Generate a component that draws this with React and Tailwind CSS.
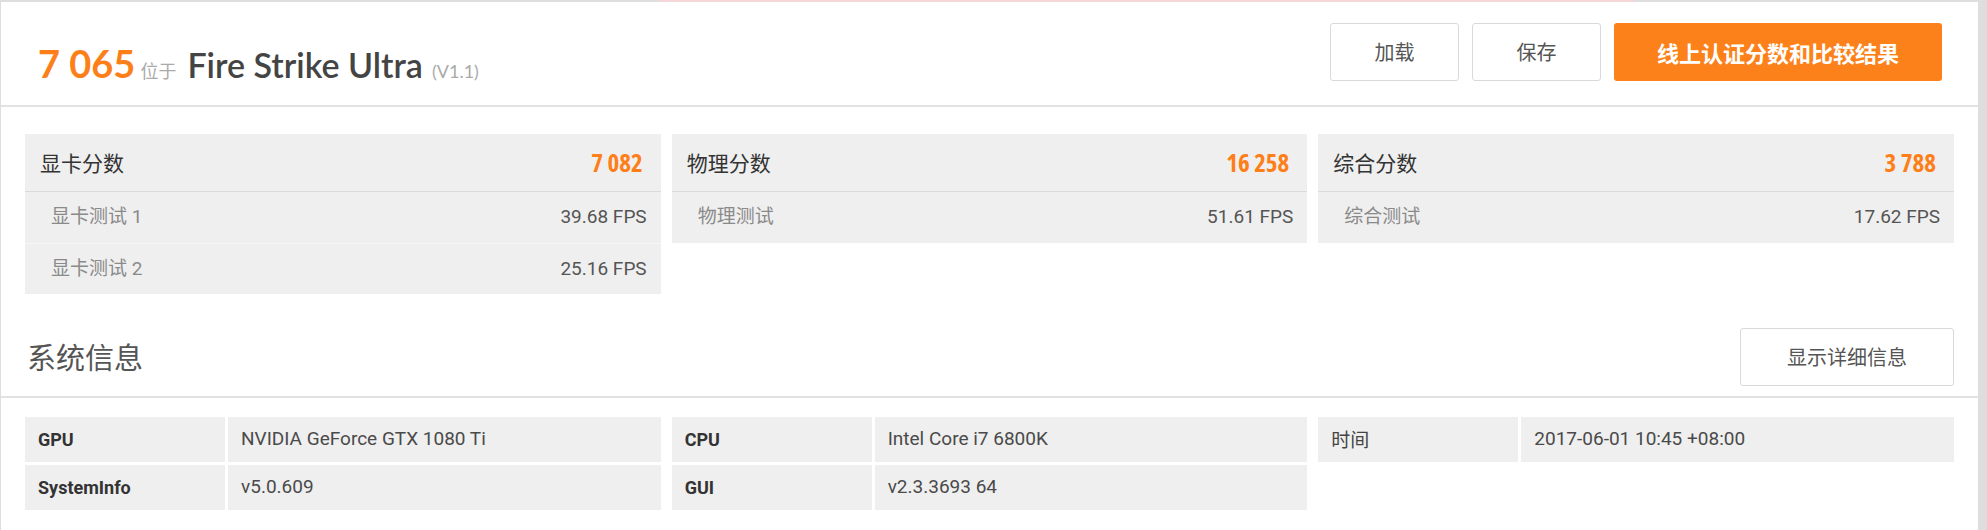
import React from "react";

const scores = [
  {
    title: "显卡分数",
    score: "7 082",
    tests: [
      { name: "显卡测试 1", value: "39.68 FPS" },
      { name: "显卡测试 2", value: "25.16 FPS" },
    ],
  },
  {
    title: "物理分数",
    score: "16 258",
    tests: [{ name: "物理测试", value: "51.61 FPS" }],
  },
  {
    title: "综合分数",
    score: "3 788",
    tests: [{ name: "综合测试", value: "17.62 FPS" }],
  },
];

const systemInfo = [
  [
    { label: "GPU", value: "NVIDIA GeForce GTX 1080 Ti" },
    { label: "SystemInfo", value: "v5.0.609" },
  ],
  [
    { label: "CPU", value: "Intel Core i7 6800K" },
    { label: "GUI", value: "v2.3.3693 64" },
  ],
  [{ label: "时间", value: "2017-06-01 10:45 +08:00", cjk: true }],
];

function ScorePanel({ item }) {
  return (
    <div className="bg-[#efefef]">
      <div className="h-[58px] flex items-center justify-between pl-[15px] pr-[18px] border-b border-[#dadada]">
        <span className="text-[21px] text-[#333] font-['Noto_Sans_CJK_SC',sans-serif]">{item.title}</span>
        <span className="text-[25px] font-bold text-[#fd7f1a] font-['Open_Sans',sans-serif] font-stretch-condensed">
          {item.score}
        </span>
      </div>
      {item.tests.map((t, i) => (
        <div
          key={t.name}
          className={
            i > 0
              ? "h-[51px] flex items-center justify-between pl-[26px] pr-[14px] border-t border-[#f7f7f7]"
              : "h-[51px] flex items-center justify-between pl-[26px] pr-[14px]"
          }
        >
          <span className="text-[19px] text-[#8a8a8a] font-['Roboto','Noto_Sans_CJK_SC',sans-serif]">{t.name}</span>
          <span className="text-[19px] text-[#555] font-['Roboto',sans-serif]">{t.value}</span>
        </div>
      ))}
    </div>
  );
}

function InfoTable({ rows }) {
  return (
    <div className="flex flex-col gap-[3px]">
      {rows.map((r) => (
        <div key={r.label} className="h-[45px] grid grid-cols-[200px_1fr] gap-[3px]">
          <div
            className={
              r.cjk
                ? "bg-[#efefef] flex items-center pl-[13px] text-[19px] text-[#444] font-['Noto_Sans_CJK_SC',sans-serif]"
                : "bg-[#efefef] flex items-center pl-[13px] text-[18px] font-bold text-[#333] font-['Roboto',sans-serif]"
            }
          >
            {r.label}
          </div>
          <div className="bg-[#efefef] flex items-center pl-[13px] text-[19px] text-[#4a4a4a] font-['Roboto',sans-serif]">
            {r.value}
          </div>
        </div>
      ))}
    </div>
  );
}

export default function App() {
  return (
    <div className="w-[1987px] h-[530px] overflow-hidden bg-[#dedede] flex flex-col">
      <div className="h-[2px] flex shrink-0">
        <div className="w-[659px]" />
        <div className="w-[975px] bg-[#f6d7d7]" />
      </div>
      <div className="flex-1 flex pl-[1px] pr-[9px]">
        <div className="flex-1 bg-white flex flex-col">
          {/* header */}
          <div className="h-[105px] shrink-0 flex items-start justify-between pl-[37px] pr-[36px] pt-[21px] border-b-2 border-[#e2e2e2]">
            <div className="mt-[21px] flex items-baseline font-['Lato',sans-serif] leading-none">
              <span className="text-[38px] font-bold text-[#fd7f1a]">7 065</span>
              <span className="ml-[5px] text-[18px] text-[#aaa] font-['Noto_Sans_CJK_SC',sans-serif]">位于</span>
              <span className="ml-[11px] text-[34px] font-semibold text-[#444]">Fire Strike Ultra</span>
              <span className="ml-[9px] text-[18px] text-[#aaa]">(V1.1)</span>
            </div>
            <div className="flex gap-[13px]">
              <button className="w-[129px] h-[58px] border border-[#d9d9d9] rounded-[3px] bg-white text-[20px] text-[#555] font-['Noto_Sans_CJK_SC',sans-serif]">
                加载
              </button>
              <button className="w-[129px] h-[58px] border border-[#d9d9d9] rounded-[3px] bg-white text-[20px] text-[#555] font-['Noto_Sans_CJK_SC',sans-serif]">
                保存
              </button>
              <button className="w-[328px] h-[58px] rounded-[3px] bg-[#fd811b] text-[22px] font-bold text-white font-['Noto_Sans_CJK_SC',sans-serif]">
                线上认证分数和比较结果
              </button>
            </div>
          </div>

          {/* score panels */}
          <div className="px-[24px] pt-[27px] grid grid-cols-3 gap-[11px] items-start">
            {scores.map((s) => (
              <ScorePanel key={s.title} item={s} />
            ))}
          </div>

          {/* system info header */}
          <div className="mt-[34px] pl-[26px] pr-[24px] pb-[10px] flex items-center justify-between border-b-2 border-[#e2e2e2]">
            <h2 className="text-[29px] text-[#555] font-['Noto_Sans_CJK_SC',sans-serif]">系统信息</h2>
            <button className="w-[214px] h-[58px] border border-[#d9d9d9] rounded-[3px] bg-white text-[20px] text-[#555] font-['Noto_Sans_CJK_SC',sans-serif]">
              显示详细信息
            </button>
          </div>

          {/* system info tables */}
          <div className="px-[24px] pt-[19px] grid grid-cols-3 gap-[11px] items-start">
            {systemInfo.map((rows, i) => (
              <InfoTable key={i} rows={rows} />
            ))}
          </div>
        </div>
      </div>
    </div>
  );
}
